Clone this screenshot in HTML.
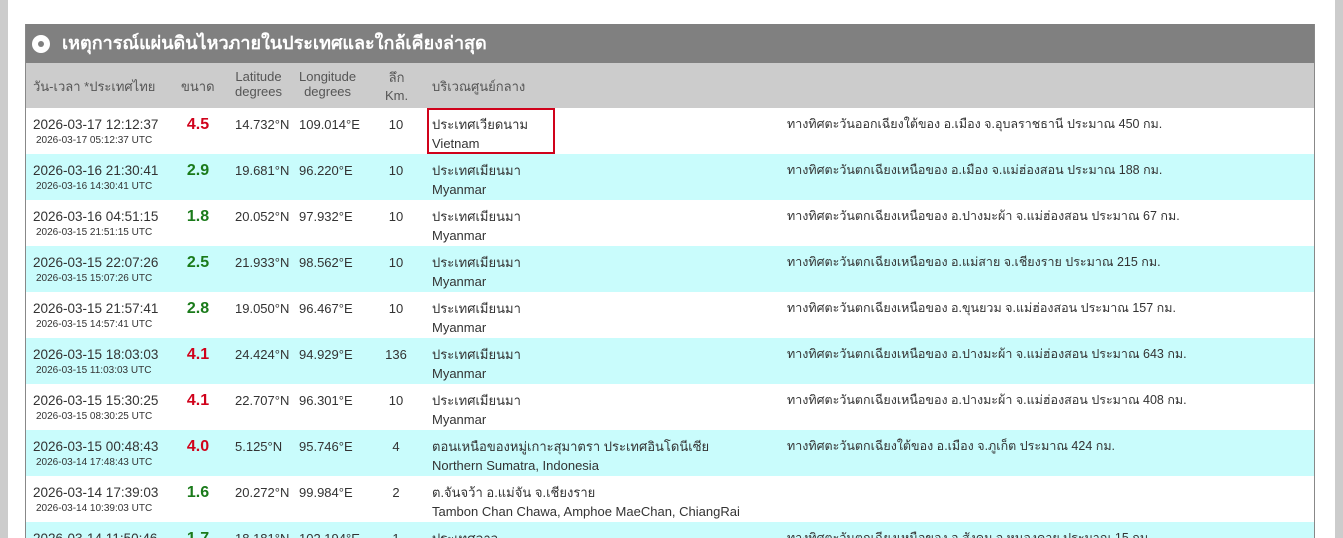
<!DOCTYPE html>
<html><head><meta charset="utf-8"><style>
html,body{margin:0;width:1343px;height:538px;overflow:hidden}
body{background:#fff;font-family:"Liberation Sans","Noto Sans CJK SC",sans-serif;color:#333;position:relative}
.ls{position:absolute;left:0;top:0;width:8px;height:538px;background:#ccc}
.rs{position:absolute;left:1335px;top:0;width:8px;height:538px;background:#ccc}
.panel{position:absolute;left:25px;top:24px;width:1288px;height:514px;overflow:hidden;border-right:1px solid #888;border-left:1px solid #888}
.hd{height:39px;background:#808080;color:#fff;font-size:18px;font-weight:bold;line-height:39px;padding-left:36px;position:relative}
.hd:before{content:"";position:absolute;left:6px;top:11px;width:18px;height:18px;border-radius:50%;background:#fff}
.hd:after{content:"";position:absolute;left:12px;top:17px;width:6px;height:6px;border-radius:50%;background:#808080}
.ch{height:45px;background:#ccc;position:relative;color:#555;font-size:13px}
.row{height:46px;position:relative;font-size:13px;color:#333}
.last{height:16px;overflow:hidden}
.c{background:#c9fcfc}
.a{position:absolute}
.d1{left:7px;top:9px;font-size:13.5px}
.d2{left:10px;top:27px;font-size:10px}
.m{left:158px;width:28px;text-align:center;top:8px;font-size:16px;font-weight:bold}
.r{color:#d0021b}.g{color:#1a7a1a}
.lat{left:209px;top:9px}.lon{left:273px;top:9px}
.dp{left:355px;width:30px;text-align:center;top:9px}
.l1{left:406px;top:6px}.l2{left:406px;top:28px}
.dir{left:761px;top:6px;font-size:12.5px}
</style></head><body>
<div class="ls"></div><div class="rs"></div>
<div class="panel">
<div class="hd">เหตุการณ์แผ่นดินไหวภายในประเทศและใกล้เคียงล่าสุด</div>
<div class="ch">
<div class="a" style="left:7px;top:13px">วัน-เวลา *ประเทศไทย</div>
<div class="a" style="left:155px;top:13px">ขนาด</div>
<div class="a" style="left:209px;top:6px;text-align:center">Latitude<br>degrees</div>
<div class="a" style="left:273px;top:6px;text-align:center">Longitude<br>degrees</div>
<div class="a" style="left:359px;top:4px;text-align:center">ลึก<br>Km.</div>
<div class="a" style="left:406px;top:13px">บริเวณศูนย์กลาง</div>
</div>
<div class="row"><div class="a d1">2026-03-17 12:12:37</div><div class="a d2">2026-03-17 05:12:37 UTC</div><div class="a m r">4.5</div><div class="a lat">14.732°N</div><div class="a lon">109.014°E</div><div class="a dp">10</div><div class="a l1">ประเทศเวียดนาม</div><div class="a l2">Vietnam</div><div class="a" style="left:401px;top:0px;width:128px;height:46px;border:2px solid #d0021b;box-sizing:border-box"></div><div class="a dir">ทางทิศตะวันออกเฉียงใต้ของ อ.เมือง จ.อุบลราชธานี ประมาณ 450 กม.</div></div>
<div class="row c"><div class="a d1">2026-03-16 21:30:41</div><div class="a d2">2026-03-16 14:30:41 UTC</div><div class="a m g">2.9</div><div class="a lat">19.681°N</div><div class="a lon">96.220°E</div><div class="a dp">10</div><div class="a l1">ประเทศเมียนมา</div><div class="a l2">Myanmar</div><div class="a dir">ทางทิศตะวันตกเฉียงเหนือของ อ.เมือง จ.แม่ฮ่องสอน ประมาณ 188 กม.</div></div>
<div class="row"><div class="a d1">2026-03-16 04:51:15</div><div class="a d2">2026-03-15 21:51:15 UTC</div><div class="a m g">1.8</div><div class="a lat">20.052°N</div><div class="a lon">97.932°E</div><div class="a dp">10</div><div class="a l1">ประเทศเมียนมา</div><div class="a l2">Myanmar</div><div class="a dir">ทางทิศตะวันตกเฉียงเหนือของ อ.ปางมะผ้า จ.แม่ฮ่องสอน ประมาณ 67 กม.</div></div>
<div class="row c"><div class="a d1">2026-03-15 22:07:26</div><div class="a d2">2026-03-15 15:07:26 UTC</div><div class="a m g">2.5</div><div class="a lat">21.933°N</div><div class="a lon">98.562°E</div><div class="a dp">10</div><div class="a l1">ประเทศเมียนมา</div><div class="a l2">Myanmar</div><div class="a dir">ทางทิศตะวันตกเฉียงเหนือของ อ.แม่สาย จ.เชียงราย ประมาณ 215 กม.</div></div>
<div class="row"><div class="a d1">2026-03-15 21:57:41</div><div class="a d2">2026-03-15 14:57:41 UTC</div><div class="a m g">2.8</div><div class="a lat">19.050°N</div><div class="a lon">96.467°E</div><div class="a dp">10</div><div class="a l1">ประเทศเมียนมา</div><div class="a l2">Myanmar</div><div class="a dir">ทางทิศตะวันตกเฉียงเหนือของ อ.ขุนยวม จ.แม่ฮ่องสอน ประมาณ 157 กม.</div></div>
<div class="row c"><div class="a d1">2026-03-15 18:03:03</div><div class="a d2">2026-03-15 11:03:03 UTC</div><div class="a m r">4.1</div><div class="a lat">24.424°N</div><div class="a lon">94.929°E</div><div class="a dp">136</div><div class="a l1">ประเทศเมียนมา</div><div class="a l2">Myanmar</div><div class="a dir">ทางทิศตะวันตกเฉียงเหนือของ อ.ปางมะผ้า จ.แม่ฮ่องสอน ประมาณ 643 กม.</div></div>
<div class="row"><div class="a d1">2026-03-15 15:30:25</div><div class="a d2">2026-03-15 08:30:25 UTC</div><div class="a m r">4.1</div><div class="a lat">22.707°N</div><div class="a lon">96.301°E</div><div class="a dp">10</div><div class="a l1">ประเทศเมียนมา</div><div class="a l2">Myanmar</div><div class="a dir">ทางทิศตะวันตกเฉียงเหนือของ อ.ปางมะผ้า จ.แม่ฮ่องสอน ประมาณ 408 กม.</div></div>
<div class="row c"><div class="a d1">2026-03-15 00:48:43</div><div class="a d2">2026-03-14 17:48:43 UTC</div><div class="a m r">4.0</div><div class="a lat">5.125°N</div><div class="a lon">95.746°E</div><div class="a dp">4</div><div class="a l1">ตอนเหนือของหมู่เกาะสุมาตรา ประเทศอินโดนีเซีย</div><div class="a l2">Northern Sumatra, Indonesia</div><div class="a dir">ทางทิศตะวันตกเฉียงใต้ของ อ.เมือง จ.ภูเก็ต ประมาณ 424 กม.</div></div>
<div class="row"><div class="a d1">2026-03-14 17:39:03</div><div class="a d2">2026-03-14 10:39:03 UTC</div><div class="a m g">1.6</div><div class="a lat">20.272°N</div><div class="a lon">99.984°E</div><div class="a dp">2</div><div class="a l1">ต.จันจว้า อ.แม่จัน จ.เชียงราย</div><div class="a l2">Tambon Chan Chawa, Amphoe MaeChan, ChiangRai</div></div>
<div class="row c last"><div class="a d1">2026-03-14 11:50:46</div><div class="a m g">1.7</div><div class="a lat">18.181°N</div><div class="a lon">102.194°E</div><div class="a dp">1</div><div class="a l1">ประเทศลาว</div><div class="a dir">ทางทิศตะวันตกเฉียงเหนือของ อ.สังคม จ.หนองคาย ประมาณ 15 กม.</div></div>
</div>
</body></html>
